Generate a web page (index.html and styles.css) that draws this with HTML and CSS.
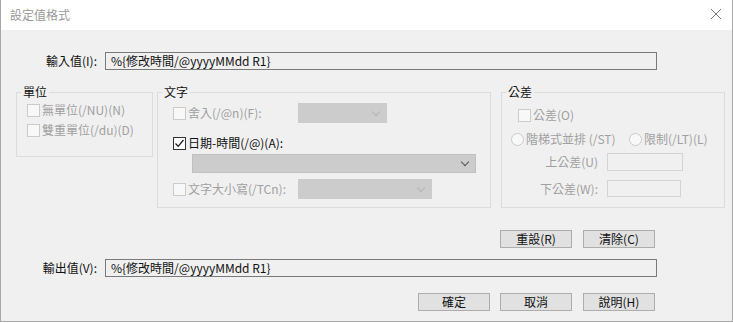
FILE: index.html
```html
<!DOCTYPE html>
<html lang="zh-Hant">
<head>
    <meta charset="UTF-8">
    <title>設定值格式</title>
    <link rel="stylesheet" href="styles.css">
</head>
<body>
    <div class="window">
        <div class="titlebar">
            <span class="title">設定值格式</span>
            <svg class="close" width="12" height="12" viewBox="0 0 12 12">
                <path d="M1 1 L11 11 M11 1 L1 11" stroke="#777" stroke-width="1" fill="none"/>
            </svg>
        </div>

        <div class="content">
            <div class="field-row">
                <span class="field-label">輸入值(I):</span>
                <div class="text-box">%{修改時間/@yyyyMMdd R1}</div>
            </div>

            <div class="groups">
                <fieldset class="group group-unit">
                    <legend>單位</legend>
                    <div class="check-row disabled">
                        <span class="check"></span>
                        <span>無單位(/NU)(N)</span>
                    </div>
                    <div class="check-row disabled">
                        <span class="check"></span>
                        <span>雙重單位(/du)(D)</span>
                    </div>
                </fieldset>

                <fieldset class="group group-text">
                    <legend>文字</legend>
                    <div class="option-row first">
                        <div class="check-row disabled fixed">
                            <span class="check"></span>
                            <span>舍入(/@n)(F):</span>
                        </div>
                        <div class="combo disabled-combo combo-small"><span class="chevron"></span></div>
                    </div>
                    <div class="check-row date-row">
                        <span class="check checked">
                            <svg width="11" height="11" viewBox="0 0 11 11">
                                <path d="M1.5 5.5 L4.2 8.3 L9.5 2" stroke="#222" stroke-width="1.3" fill="none"/>
                            </svg>
                        </span>
                        <span>日期-時間(/@)(A):</span>
                    </div>
                    <div class="combo combo-wide"><span class="chevron dark"></span></div>
                    <div class="option-row last">
                        <div class="check-row disabled fixed">
                            <span class="check"></span>
                            <span>文字大小寫(/TCn):</span>
                        </div>
                        <div class="combo disabled-combo combo-mid"><span class="chevron"></span></div>
                    </div>
                </fieldset>

                <fieldset class="group group-tol">
                    <legend>公差</legend>
                    <div class="check-row disabled tol-check">
                        <span class="check"></span>
                        <span>公差(O)</span>
                    </div>
                    <div class="radio-row disabled">
                        <div class="radio-item first-radio">
                            <span class="radio"></span>
                            <span>階梯式並排 (/ST)</span>
                        </div>
                        <div class="radio-item">
                            <span class="radio"></span>
                            <span>限制(/LT)(L)</span>
                        </div>
                    </div>
                    <div class="tol-row upper disabled">
                        <span class="tol-label">上公差(U)</span>
                        <div class="tol-box"></div>
                    </div>
                    <div class="tol-row lower disabled">
                        <span class="tol-label">下公差(W):</span>
                        <div class="tol-box short"></div>
                    </div>
                </fieldset>
            </div>

            <div class="button-row reset-row">
                <button class="btn">重設(R)</button>
                <button class="btn">清除(C)</button>
            </div>

            <div class="field-row output-row">
                <span class="field-label">輸出值(V):</span>
                <div class="text-box">%{修改時間/@yyyyMMdd R1}</div>
            </div>

            <div class="button-row bottom-row">
                <button class="btn">確定</button>
                <button class="btn">取消</button>
                <button class="btn">說明(H)</button>
            </div>
        </div>
    </div>
</body>
</html>
```

FILE: styles.css
```css
* {
    box-sizing: border-box;
}

body {
    margin: 0;
    padding: 0;
    background-color: white;
    font-family: "Noto Sans CJK TC", "Liberation Sans", sans-serif;
    font-size: 12px;
    line-height: 14px;
    color: #111;
}

.window {
    width: 733px;
    height: 322px;
    border-left: 1px solid #a8a8a8;
    border-right: 1px solid #a8a8a8;
    border-bottom: 1px solid #a8a8a8;
    display: flex;
    flex-direction: column;
}

.titlebar {
    height: 30px;
    background-color: white;
    display: flex;
    justify-content: space-between;
    align-items: center;
    padding: 0 10px 0 9px;
}

.title {
    color: #999;
}

.close {
    margin-top: -2px;
}

.content {
    flex: 1;
    background-color: #f0f0f0;
    padding-top: 22px;
}

/* input / output rows */

.field-row {
    display: flex;
    align-items: center;
    height: 18px;
    padding-left: 16px;
}

.field-label {
    width: 80px;
    margin-right: 8px;
    text-align: right;
}

.text-box {
    width: 552px;
    height: 18px;
    border: 1px solid #7a7a7a;
    padding-left: 5px;
    display: flex;
    align-items: center;
}

.output-row {
    margin-top: 11px;
}

/* group boxes */

.groups {
    display: flex;
    align-items: flex-start;
    margin-top: 15px;
    padding-left: 15px;
}

.group {
    margin: 0;
    padding: 0;
    border: 1px solid #dcdcdc;
    min-width: 0;
}

.group legend {
    padding: 0 2px;
    color: #111;
}

.group-unit {
    width: 137px;
    height: 72px;
    padding: 1px 0 0 10px;
    margin-right: 4px;
}

.group-unit legend {
    margin-left: -6px;
}

.group-text {
    width: 334px;
    height: 123px;
    padding-left: 15px;
    margin-right: 10px;
}

.group-text legend {
    margin-left: -11px;
}

.group-tol {
    width: 224px;
    height: 123px;
    padding-left: 16px;
}

.group-tol legend {
    margin-left: -12px;
}

.check-row {
    display: flex;
    align-items: center;
    height: 20px;
}

.check {
    width: 13px;
    height: 13px;
    border: 1px solid #cbcbcb;
    background-color: #f8f8f8;
    margin-right: 2px;
    display: flex;
    align-items: center;
    justify-content: center;
}

.check.checked {
    border-color: #333;
    background-color: white;
}

.disabled {
    color: #a0a0a0;
}

.option-row {
    display: flex;
    align-items: center;
    height: 20px;
}

.option-row.first {
    margin-top: 4px;
}

.option-row.last {
    margin-top: 6px;
}

.fixed {
    width: 125px;
}

.date-row {
    margin-top: 10px;
}

.combo {
    height: 20px;
    background-color: #cccccc;
    border: 1px solid #c0c0c0;
    display: flex;
    align-items: center;
    justify-content: flex-end;
    padding-right: 7px;
}

.disabled-combo {
    border-color: #cccccc;
}

.combo-small {
    width: 89px;
}

.combo-mid {
    width: 134px;
}

.combo-wide {
    width: 284px;
    height: 19px;
    margin-left: 19px;
    margin-top: 1px;
}

.chevron {
    width: 6px;
    height: 6px;
    border-right: 1px solid #b4b4b4;
    border-bottom: 1px solid #b4b4b4;
    transform: rotate(45deg);
    margin-top: -3px;
}

.chevron.dark {
    border-color: #555;
}

/* tolerance group */

.tol-check {
    margin-top: 6px;
}

.radio-row {
    display: flex;
    align-items: center;
    height: 20px;
    margin-top: 4px;
    margin-left: -7px;
}

.radio-item {
    display: flex;
    align-items: center;
}

.first-radio {
    width: 118px;
}

.radio {
    width: 13px;
    height: 13px;
    border: 1px solid #cbcbcb;
    border-radius: 50%;
    background-color: #f8f8f8;
    margin-right: 2px;
}

.tol-row {
    display: flex;
    align-items: center;
}

.tol-row.upper {
    margin-top: 4px;
}

.tol-row.lower {
    margin-top: 9px;
}

.tol-label {
    width: 80px;
    margin-right: 9px;
    text-align: right;
}

.tol-box {
    width: 76px;
    height: 18px;
    border: 1px solid #d4d4d4;
}

.tol-box.short {
    width: 74px;
    height: 17px;
}

/* buttons */

.button-row {
    display: flex;
    gap: 11px;
}

.reset-row {
    margin-top: 22px;
    padding-left: 499px;
}

.bottom-row {
    margin-top: 16px;
    padding-left: 417px;
}

.bottom-row .btn:first-child {
    margin-right: -1px;
}

.btn {
    width: 72px;
    height: 18px;
    padding: 0;
    background-color: #e1e1e1;
    border: 1px solid #adadad;
    font-family: "Noto Sans CJK TC", "Liberation Sans", sans-serif;
    font-size: 12px;
    line-height: 14px;
    color: #111;
}
```
